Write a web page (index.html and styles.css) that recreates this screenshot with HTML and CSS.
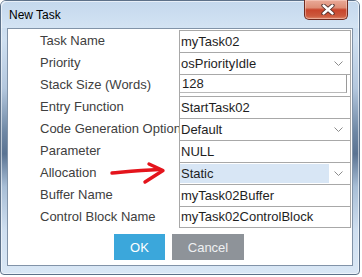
FILE: index.html
```html
<!DOCTYPE html>
<html lang="en">
<head>
    <meta charset="UTF-8">
    <title>New Task</title>
    <link rel="stylesheet" href="styles.css">
</head>
<body>
    <div class="window">
        <div class="titlebar">
            <span class="title">New Task</span>
            <button class="close-btn" aria-label="Close">
                <svg width="14" height="11" viewBox="0 0 14 11">
                    <path d="M2.5 1.5 L11.5 9.5 M11.5 1.5 L2.5 9.5" stroke="#4a2a26" stroke-width="4.2" stroke-linecap="round"/>
                    <path d="M2.5 1.5 L11.5 9.5 M11.5 1.5 L2.5 9.5" stroke="#fff" stroke-width="2.4" stroke-linecap="round"/>
                </svg>
            </button>
        </div>
        <div class="client">
            <div class="props">
                <div class="label">Task Name</div>
                <div class="value">myTask02</div>

                <div class="label">Priority</div>
                <div class="value combo">
                    <span class="combo-text">osPriorityIdle</span>
                    <span class="combo-arrow"><svg width="9" height="5" viewBox="0 0 9 5"><polyline points="0.5,0.5 4.5,4.5 8.5,0.5" fill="none" stroke="#8c8c8c"/></svg></span>
                </div>

                <div class="label">Stack Size (Words)</div>
                <div class="value input-cell"><div class="field">128</div></div>

                <div class="label">Entry Function</div>
                <div class="value">StartTask02</div>

                <div class="label">Code Generation Option</div>
                <div class="value combo">
                    <span class="combo-text">Default</span>
                    <span class="combo-arrow"><svg width="9" height="5" viewBox="0 0 9 5"><polyline points="0.5,0.5 4.5,4.5 8.5,0.5" fill="none" stroke="#8c8c8c"/></svg></span>
                </div>

                <div class="label">Parameter</div>
                <div class="value">NULL</div>

                <div class="label">Allocation</div>
                <div class="value combo active">
                    <span class="combo-text">Static</span>
                    <span class="combo-arrow"><svg width="9" height="5" viewBox="0 0 9 5"><polyline points="0.5,0.5 4.5,4.5 8.5,0.5" fill="none" stroke="#8c8c8c"/></svg></span>
                </div>

                <div class="label">Buffer Name</div>
                <div class="value">myTask02Buffer</div>

                <div class="label">Control Block Name</div>
                <div class="value last">myTask02ControlBlock</div>
            </div>

            <div class="actions">
                <button class="btn btn-ok">OK</button>
                <button class="btn btn-cancel">Cancel</button>
            </div>

            <!-- hand drawn pointer over the Allocation row -->
            <svg class="arrow" width="60" height="28" viewBox="0 0 60 28">
                <path d="M4 14 C16 13 30 11.5 51 10.5" fill="none" stroke="#e4141c" stroke-width="3.4" stroke-linecap="round"/>
                <path d="M41 5 L55 11.5 L37 23" fill="none" stroke="#e4141c" stroke-width="3.4" stroke-linecap="round" stroke-linejoin="round"/>
            </svg>
        </div>
    </div>
</body>
</html>
```

FILE: styles.css
```css
:root {
    --frame-edge: #5d7189;
    --cell-border: #a8a8a8;
    --label-color: #404040;
    --value-color: #1e1e1e;
    --ok-color: #3ba7db;
    --cancel-color: #8e9399;
    --highlight: #d8e6f5;
}
* {
    box-sizing: border-box;
}
body {
    margin: 0;
    background: #fff;
    font-family: 'Liberation Sans', Arial, sans-serif;
}
.window {
    width: 360px;
    height: 275px;
    border: 1px solid var(--frame-edge);
    border-radius: 6px 6px 4px 4px;
    padding: 0 6px 8px;
    display: flex;
    flex-direction: column;
    background: linear-gradient(to bottom, #c6d9ed 0%, #cfe0f1 14%, #b4c8de 32%, #6e87a4 48%, #5a7392 56%, #a8bed6 68%, #cfdff0 84%, #d9e7f5 100%);
    box-shadow: inset 0 0 0 1px rgba(255, 255, 255, 0.55);
}
.titlebar {
    display: flex;
    justify-content: space-between;
    align-items: flex-start;
    height: 27px;
    margin: 0 -6px;
    padding: 0 6px;
    border-radius: 5px 5px 0 0;
    background: linear-gradient(to bottom, #c4d8ed, #d3e3f3);
    box-shadow: inset 1px 1px 0 rgba(255, 255, 255, 0.6), inset -1px 0 0 rgba(255, 255, 255, 0.6);
}
.title {
    font-size: 12px;
    line-height: 14px;
    padding: 7px 0 0 2px;
    color: #000;
}
.close-btn {
    width: 44px;
    height: 20px;
    margin: -1px 5px 0 0;
    padding: 0;
    border: 1px solid #6e2b20;
    border-top: none;
    border-radius: 0 0 5px 5px;
    background: linear-gradient(to bottom, #e9aa98 0%, #de8e77 40%, #c8452c 52%, #cc5a3e 85%, #df8a6c 100%);
    box-shadow: inset 0 0 0 1px rgba(255, 220, 210, 0.45);
    display: flex;
    align-items: center;
    justify-content: center;
    cursor: pointer;
}
.close-btn svg {
    margin: -1px 0 0 3px;
}
.client {
    position: relative;
    flex: 1;
    display: flex;
    flex-direction: column;
    background: #fff;
    border: 1px solid #8193a8;
}
.props {
    display: grid;
    grid-template-columns: 171px 172px;
    grid-auto-rows: 22px;
    padding-top: 1px;
}
.label {
    padding-left: 32px;
    font-size: 13px;
    line-height: 22px;
    color: var(--label-color);
    white-space: nowrap;
    overflow: hidden;
}
.value {
    border: 1px solid var(--cell-border);
    border-bottom: none;
    padding-left: 1px;
    font-size: 13px;
    line-height: 21px;
    color: var(--value-color);
    white-space: nowrap;
    overflow: hidden;
}
.value.last {
    border-bottom: 1px solid var(--cell-border);
    line-height: 20px;
}
.combo {
    display: flex;
    padding-left: 0;
}
.combo-text {
    flex: 1;
    padding-left: 1px;
}
.combo.active .combo-text {
    margin: 1px 0;
    line-height: 19px;
    background: var(--highlight);
}
.combo-arrow {
    width: 21px;
    display: flex;
    align-items: center;
    padding-left: 5px;
}
.input-cell {
    padding: 0 3px 0 0;
}
.field {
    height: 19px;
    margin: -1px 0 0 -1px;
    padding-left: 2px;
    border: 1px solid #7a7a7a;
    border-bottom-color: #b9b9b9;
    border-right-color: #9a9a9a;
    line-height: 18px;
}
.actions {
    display: flex;
    justify-content: center;
    gap: 7px;
    margin-top: 6px;
    padding-right: 2px;
}
.btn {
    height: 26px;
    padding: 0;
    border: none;
    font-family: 'Liberation Sans', Arial, sans-serif;
    font-size: 13px;
    color: #fff;
    cursor: pointer;
}
.btn-ok {
    width: 51px;
    background: var(--ok-color);
}
.btn-cancel {
    width: 72px;
    background: var(--cancel-color);
    color: #eef0f2;
}
.arrow {
    position: absolute;
    left: 100px;
    top: 130px;
}
```
